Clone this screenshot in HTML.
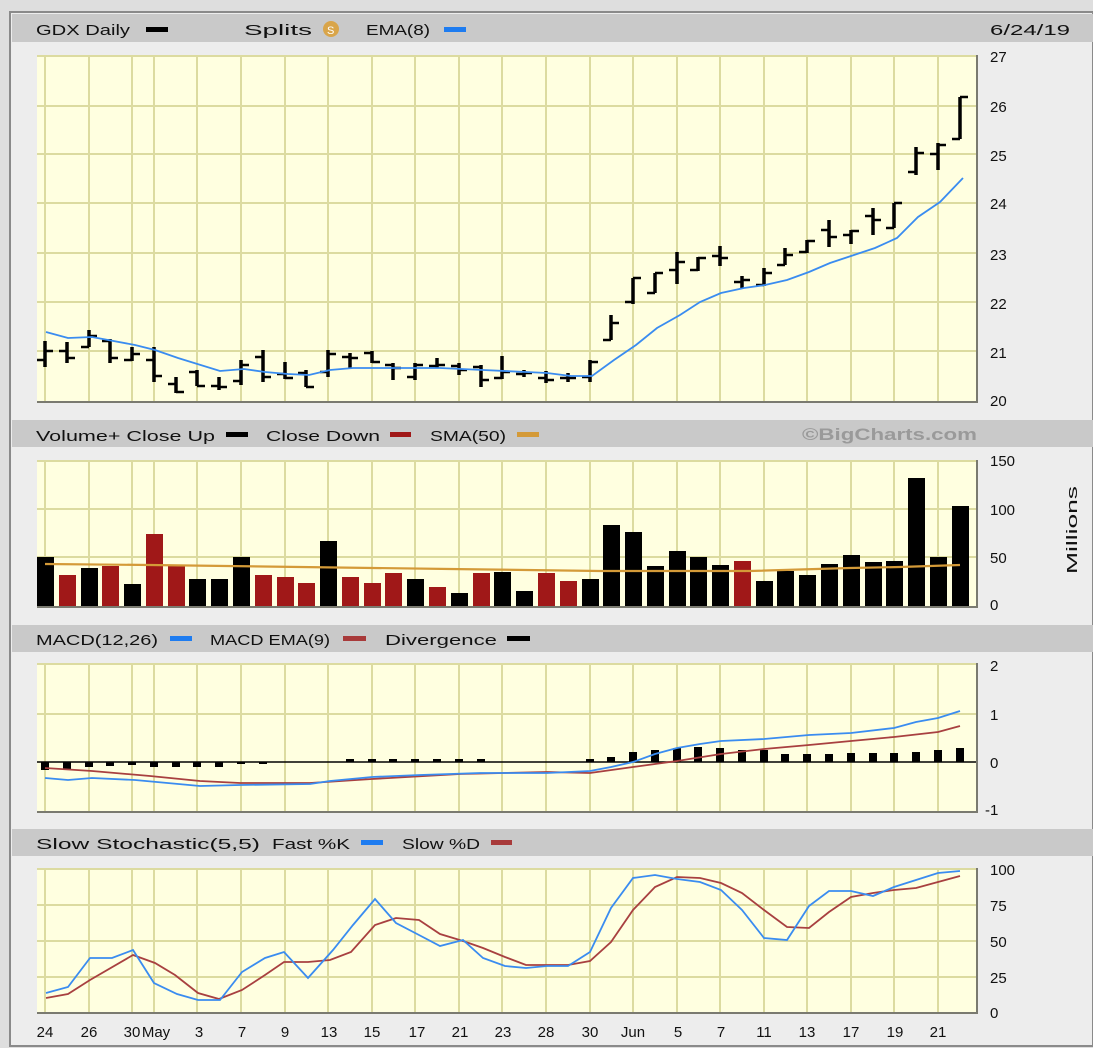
<!DOCTYPE html>
<html><head><meta charset="utf-8"><style>
html,body{margin:0;padding:0;background:#dedede;}
svg{display:block;}
text{font-family:"Liberation Sans","DejaVu Sans",sans-serif;font-size:15px;fill:#111;}
</style></head><body>
<svg width="1093" height="1048" viewBox="0 0 1093 1048" xmlns="http://www.w3.org/2000/svg">
<rect x="0" y="0" width="1093" height="1048" fill="#dedede"/>
<rect x="10" y="12" width="1083" height="1034" fill="#ededed" stroke="#8a8a8a" stroke-width="2"/>
<!-- headers -->
<rect x="12" y="14" width="1081" height="28" fill="#c9c9c9"/>
<rect x="12" y="420" width="1081" height="27" fill="#c9c9c9"/>
<rect x="12" y="625" width="1081" height="27" fill="#c9c9c9"/>
<rect x="12" y="829" width="1081" height="27" fill="#c9c9c9"/>

<!-- header1 -->
<text x="36" y="35" textLength="94" lengthAdjust="spacingAndGlyphs">GDX Daily</text>
<rect x="146" y="27" width="22" height="5" fill="#000"/>
<text x="244" y="35" textLength="68" lengthAdjust="spacingAndGlyphs">Splits</text>
<circle cx="331" cy="29" r="8" fill="#d9a54a"/>
<text x="327" y="34" style="font-size:11px;fill:#fff">S</text>
<text x="366" y="35" textLength="64" lengthAdjust="spacingAndGlyphs">EMA(8)</text>
<rect x="444" y="27" width="22" height="5" fill="#1e7cf0"/>
<text x="990" y="35" textLength="80" lengthAdjust="spacingAndGlyphs">6/24/19</text>
<!-- header2 -->
<text x="36" y="441" textLength="179" lengthAdjust="spacingAndGlyphs">Volume+ Close Up</text>
<rect x="226" y="432" width="22" height="5" fill="#000"/>
<text x="266" y="441" textLength="114" lengthAdjust="spacingAndGlyphs">Close Down</text>
<rect x="390" y="432" width="21" height="5" fill="#a01818"/>
<text x="430" y="441" textLength="76" lengthAdjust="spacingAndGlyphs">SMA(50)</text>
<rect x="517" y="432" width="22" height="5" fill="#d49a38"/>
<text x="802" y="440" textLength="175" lengthAdjust="spacingAndGlyphs" style="font-weight:bold;font-size:17px;fill:#9a9a9a">©BigCharts.com</text>
<!-- header3 -->
<text x="36" y="645" textLength="122" lengthAdjust="spacingAndGlyphs">MACD(12,26)</text>
<rect x="170" y="636" width="22" height="5" fill="#1e7cf0"/>
<text x="210" y="645" textLength="120" lengthAdjust="spacingAndGlyphs">MACD EMA(9)</text>
<rect x="343" y="636" width="23" height="5" fill="#a83a3a"/>
<text x="385" y="645" textLength="112" lengthAdjust="spacingAndGlyphs">Divergence</text>
<rect x="507" y="636" width="23" height="5" fill="#000"/>
<!-- header4 -->
<text x="36" y="849" textLength="224" lengthAdjust="spacingAndGlyphs">Slow Stochastic(5,5)</text>
<text x="272" y="849" textLength="78" lengthAdjust="spacingAndGlyphs">Fast %K</text>
<rect x="361" y="840" width="22" height="5" fill="#1e7cf0"/>
<text x="402" y="849" textLength="78" lengthAdjust="spacingAndGlyphs">Slow %D</text>
<rect x="491" y="840" width="21" height="5" fill="#a83a3a"/>

<!-- plot backgrounds -->
<g fill="#ffffe0" stroke="none">
<rect x="37" y="55" width="939" height="346"/>
<rect x="37" y="460" width="939" height="146"/>
<rect x="37" y="663" width="939" height="148"/>
<rect x="37" y="868" width="939" height="144"/>
</g>
<!-- grid -->
<g stroke="#dcdba0" stroke-width="2" fill="none">
<path d="M45 55V401M89 55V401M132 55V401M154 55V401M197 55V401M241 55V401M285 55V401M328 55V401M372 55V401M415 55V401M459 55V401M502 55V401M546 55V401M590 55V401M633 55V401M677 55V401M720 55V401M764 55V401M807 55V401M851 55V401M894 55V401M938 55V401"/>
<path d="M37 106H976M37 154H976M37 203H976M37 253H976M37 302H976M37 351H976M37 56H976"/>
<path d="M45 460V606M89 460V606M132 460V606M154 460V606M197 460V606M241 460V606M285 460V606M328 460V606M372 460V606M415 460V606M459 460V606M502 460V606M546 460V606M590 460V606M633 460V606M677 460V606M720 460V606M764 460V606M807 460V606M851 460V606M894 460V606M938 460V606"/>
<path d="M37 461H976M37 509H976M37 557H976"/>
<path d="M45 663V811M89 663V811M132 663V811M154 663V811M197 663V811M241 663V811M285 663V811M328 663V811M372 663V811M415 663V811M459 663V811M502 663V811M546 663V811M590 663V811M633 663V811M677 663V811M720 663V811M764 663V811M807 663V811M851 663V811M894 663V811M938 663V811"/>
<path d="M37 664H976M37 714H976"/>
<path d="M45 868V1012M89 868V1012M132 868V1012M154 868V1012M197 868V1012M241 868V1012M285 868V1012M328 868V1012M372 868V1012M415 868V1012M459 868V1012M502 868V1012M546 868V1012M590 868V1012M633 868V1012M677 868V1012M720 868V1012M764 868V1012M807 868V1012M851 868V1012M894 868V1012M938 868V1012"/>
<path d="M37 869H976M37 905H976M37 941H976M37 977H976"/>
</g>
<!-- plot borders (shadow) -->
<g stroke="#7a7a70" stroke-width="2" fill="none">
<path d="M37 402H977V55"/>
<path d="M37 607H977V460"/>
<path d="M37 812H977V663"/>
<path d="M37 1013H977V868"/>
</g>

<!-- price bars -->
<g stroke="#000" fill="none" stroke-linecap="butt">
<path stroke-width="3.5" d="M45 341V367M67 342V363M89 330V347M110 339V363M132 347V361M154 347V382M176 377V393M197 370V386M219 377V390M241 360V385M263 350V382M285 362V379M306 370V387M328 350V377M350 353V369M372 351V363M393 363V380M415 363V380M437 358V368M459 363V375M481 365V387M502 356V379M524 370V377M546 371V383M568 373V382M590 360V382M611 315V340M633 278V304M655 273V293M677 252V284M698 257V271M720 246V266M742 276V288M764 268V286M785 248V265M807 240V253M829 220V247M851 230V244M873 208V235M894 203V228M916 147V175M938 143V170M960 97V139"/>
<path stroke-width="2.5" d="M37 360H45M45 351H53M59 351H67M67 358H75M81 347H89M89 336H97M102 341H110M110 358H118M124 360H132M132 354H140M146 360H154M154 376H162M168 384H176M176 392H184M189 372H197M197 386H205M211 386H219M219 387H227M233 381H241M241 365H249M255 357H263M263 377H271M277 374H285M285 378H293M298 373H306M306 387H314M320 372H328M328 354H336M342 357H350M350 358H358M364 353H372M372 362H380M385 365H393M393 368H401M407 377H415M415 365H423M429 366H437M437 365H445M451 366H459M459 370H467M473 367H481M481 380H489M494 378H502M502 372H510M516 374H524M524 373H532M538 378H546M546 380H554M560 378H568M568 378H576M582 377H590M590 362H598M603 340H611M611 323H619M625 302H633M633 278H641M647 293H655M655 273H663M669 270H677M677 262H685M690 270H698M698 258H706M712 256H720M720 258H728M734 282H742M742 280H750M756 285H764M764 273H772M777 265H785M785 255H793M799 252H807M807 241H815M821 230H829M829 237H837M843 235H851M851 231H859M865 216H873M873 220H881M886 228H894M894 203H902M908 172H916M916 153H924M930 154H938M938 145H946M952 139H960M960 97H968"/>
</g>
<polyline fill="none" stroke="#3a8cf0" stroke-width="1.8" points="46,332 68,338 92,337 135,345 155,350 178,358 220,371 244,369 265,372 288,374 309,375 330,370 353,368 396,368 440,368 483,370 526,372 547,373 571,376 592,376 614,360 636,345 657,328 680,315 700,302 721,293 744,288 765,285 787,280 809,272 830,263 854,255 875,248 897,238 918,217 940,202 963,178"/>

<!-- volume bars -->
<g>
<rect x="37" y="557" width="17" height="49" fill="#000"/>
<rect x="59" y="575" width="17" height="31" fill="#a01818"/>
<rect x="81" y="568" width="17" height="38" fill="#000"/>
<rect x="102" y="566" width="17" height="40" fill="#a01818"/>
<rect x="124" y="584" width="17" height="22" fill="#000"/>
<rect x="146" y="534" width="17" height="72" fill="#a01818"/>
<rect x="168" y="566" width="17" height="40" fill="#a01818"/>
<rect x="189" y="579" width="17" height="27" fill="#000"/>
<rect x="211" y="579" width="17" height="27" fill="#000"/>
<rect x="233" y="557" width="17" height="49" fill="#000"/>
<rect x="255" y="575" width="17" height="31" fill="#a01818"/>
<rect x="277" y="577" width="17" height="29" fill="#a01818"/>
<rect x="298" y="583" width="17" height="23" fill="#a01818"/>
<rect x="320" y="541" width="17" height="65" fill="#000"/>
<rect x="342" y="577" width="17" height="29" fill="#a01818"/>
<rect x="364" y="583" width="17" height="23" fill="#a01818"/>
<rect x="385" y="573" width="17" height="33" fill="#a01818"/>
<rect x="407" y="579" width="17" height="27" fill="#000"/>
<rect x="429" y="587" width="17" height="19" fill="#a01818"/>
<rect x="451" y="593" width="17" height="13" fill="#000"/>
<rect x="473" y="573" width="17" height="33" fill="#a01818"/>
<rect x="494" y="572" width="17" height="34" fill="#000"/>
<rect x="516" y="591" width="17" height="15" fill="#000"/>
<rect x="538" y="573" width="17" height="33" fill="#a01818"/>
<rect x="560" y="581" width="17" height="25" fill="#a01818"/>
<rect x="582" y="579" width="17" height="27" fill="#000"/>
<rect x="603" y="525" width="17" height="81" fill="#000"/>
<rect x="625" y="532" width="17" height="74" fill="#000"/>
<rect x="647" y="566" width="17" height="40" fill="#000"/>
<rect x="669" y="551" width="17" height="55" fill="#000"/>
<rect x="690" y="557" width="17" height="49" fill="#000"/>
<rect x="712" y="565" width="17" height="41" fill="#000"/>
<rect x="734" y="561" width="17" height="45" fill="#a01818"/>
<rect x="756" y="581" width="17" height="25" fill="#000"/>
<rect x="777" y="571" width="17" height="35" fill="#000"/>
<rect x="799" y="575" width="17" height="31" fill="#000"/>
<rect x="821" y="564" width="17" height="42" fill="#000"/>
<rect x="843" y="555" width="17" height="51" fill="#000"/>
<rect x="865" y="562" width="17" height="44" fill="#000"/>
<rect x="886" y="561" width="17" height="45" fill="#000"/>
<rect x="908" y="478" width="17" height="128" fill="#000"/>
<rect x="930" y="557" width="17" height="49" fill="#000"/>
<rect x="952" y="506" width="17" height="100" fill="#000"/>
</g>
<polyline fill="none" stroke="#d49a38" stroke-width="2.2" points="45,564 150,565 300,567 450,569 600,571 750,571 850,568 900,567 960,565"/>

<!-- MACD -->
<g fill="#000">
<rect x="41" y="762" width="8" height="8"/><rect x="63" y="762" width="8" height="8"/><rect x="85" y="762" width="8" height="5"/><rect x="106" y="762" width="8" height="4"/><rect x="128" y="762" width="8" height="3"/><rect x="150" y="762" width="8" height="5"/><rect x="172" y="762" width="8" height="5"/><rect x="193" y="762" width="8" height="5"/><rect x="215" y="762" width="8" height="5"/><rect x="237" y="762" width="8" height="2"/><rect x="259" y="762" width="8" height="2"/>
<rect x="346" y="759" width="8" height="3"/><rect x="368" y="759" width="8" height="3"/><rect x="389" y="759" width="8" height="3"/><rect x="411" y="759" width="8" height="3"/><rect x="433" y="759" width="8" height="3"/><rect x="455" y="759" width="8" height="3"/><rect x="477" y="759" width="8" height="3"/>
<rect x="586" y="759" width="8" height="3"/><rect x="607" y="757" width="8" height="5"/><rect x="629" y="752" width="8" height="10"/><rect x="651" y="750" width="8" height="12"/><rect x="673" y="748" width="8" height="14"/><rect x="694" y="747" width="8" height="15"/><rect x="716" y="748" width="8" height="14"/><rect x="738" y="750" width="8" height="12"/><rect x="760" y="750" width="8" height="12"/><rect x="781" y="754" width="8" height="8"/><rect x="803" y="754" width="8" height="8"/><rect x="825" y="754" width="8" height="8"/><rect x="847" y="753" width="8" height="9"/><rect x="869" y="753" width="8" height="9"/><rect x="890" y="753" width="8" height="9"/><rect x="912" y="752" width="8" height="10"/><rect x="934" y="750" width="8" height="12"/><rect x="956" y="748" width="8" height="14"/>
</g>
<path d="M37 762H976" stroke="#000" stroke-width="1.5"/>
<polyline fill="none" stroke="#a84040" stroke-width="1.8" points="45,768 92,771 150,776 200,781 240,783 310,783 372,779 460,774 547,772 590,773 633,767 677,761 721,754 764,749 809,745 851,741 894,737 938,732 960,726"/>
<polyline fill="none" stroke="#3a8cf0" stroke-width="1.8" points="45,778 68,780 92,778 135,780 200,786 240,785 310,784 330,781 372,777 420,775 480,773 547,773 590,771 611,767 633,762 655,754 677,748 700,744 721,741 764,739 809,735 851,733 894,728 916,722 938,718 960,711"/>

<!-- Stochastic -->
<polyline fill="none" stroke="#a84040" stroke-width="1.8" points="46,998 68,994 90,980 133,955 155,963 175,975 198,993 219,999 242,990 265,975 284,962 308,962 330,960 351,952 375,925 396,918 419,920 440,934 463,941 483,948 505,957 526,965 547,965 568,965 590,961 611,942 633,910 655,887 677,877 700,878 721,883 742,893 764,910 787,927 809,928 829,912 851,897 873,893 894,890 916,888 938,882 960,876"/>
<polyline fill="none" stroke="#3a8cf0" stroke-width="1.8" points="46,993 68,987 90,958 112,958 133,950 154,983 177,994 198,1000 220,1000 242,972 265,958 284,952 308,978 333,950 353,925 375,899 396,923 419,935 440,946 463,940 483,958 505,966 526,968 547,966 568,966 590,952 611,908 633,878 655,875 677,879 700,882 721,890 742,910 764,938 787,940 809,906 829,891 851,891 873,896 894,887 916,880 938,873 960,871"/>

<!-- right axis labels -->
<g>
<text x="990" y="62">27</text><text x="990" y="112">26</text><text x="990" y="161">25</text><text x="990" y="209">24</text><text x="990" y="260">23</text><text x="990" y="309">22</text><text x="990" y="358">21</text><text x="990" y="406">20</text>
<text x="990" y="466">150</text><text x="990" y="515">100</text><text x="990" y="563">50</text><text x="990" y="610">0</text>
<text x="990" y="671">2</text><text x="990" y="720">1</text><text x="990" y="768">0</text><text x="985" y="815">-1</text>
<text x="990" y="875">100</text><text x="990" y="911">75</text><text x="990" y="947">50</text><text x="990" y="983">25</text><text x="990" y="1018">0</text>
<text transform="translate(1077,530) rotate(-90)" text-anchor="middle" textLength="88" lengthAdjust="spacingAndGlyphs">Millions</text>
</g>
<!-- date labels -->
<g text-anchor="middle">
<text x="45" y="1037">24</text><text x="89" y="1037">26</text><text x="132" y="1037">30</text><text x="156" y="1037">May</text><text x="199" y="1037">3</text><text x="242" y="1037">7</text><text x="285" y="1037">9</text><text x="329" y="1037">13</text><text x="372" y="1037">15</text><text x="417" y="1037">17</text><text x="460" y="1037">21</text><text x="503" y="1037">23</text><text x="546" y="1037">28</text><text x="590" y="1037">30</text><text x="633" y="1037">Jun</text><text x="678" y="1037">5</text><text x="721" y="1037">7</text><text x="764" y="1037">11</text><text x="807" y="1037">13</text><text x="851" y="1037">17</text><text x="895" y="1037">19</text><text x="938" y="1037">21</text>
</g>
</svg>
</body></html>
